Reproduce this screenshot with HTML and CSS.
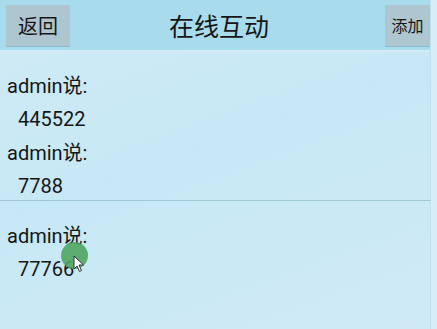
FILE: index.html
```html
<!DOCTYPE html>
<html>
<head>
<meta charset="utf-8">
<link rel="stylesheet" href="styles.css">
</head>
<body>
<div class="screen">
  <div class="main">
    <div class="header">
      <div class="btn btn-back">返回</div>
      <div class="title">在线互动</div>
      <div class="btn btn-add">添加</div>
    </div>
    <div class="list">
      <div class="group">
        <div class="who">admin说:</div>
        <div class="msg">445522</div>
        <div class="who">admin说:</div>
        <div class="msg">7788</div>
      </div>
      <div class="group second">
        <div class="who">admin说:</div>
        <div class="msg">77766</div>
      </div>
    </div>
  </div>
  <div class="edge"></div>
  <div class="touch"></div>
  <svg class="cursor" width="12" height="18" viewBox="0 0 12 18"><path d="M1 1 L1 14 L4 11 L6.5 16.5 L8.5 15.5 L6 10 L10.5 10 Z" fill="#fff" stroke="#333" stroke-width="1"/></svg>
</div>
</body>
</html>
```
FILE: styles.css
```css
html, body {
  margin: 0;
  padding: 0;
}
body {
  width: 437px;
  height: 329px;
  overflow: hidden;
  font-family: Roboto, "Noto Sans CJK SC", sans-serif;
  color: #161616;
}
.screen {
  position: relative;
  display: flex;
  width: 437px;
  height: 329px;
  overflow: hidden;
  background: linear-gradient(160deg, #d0ebf6 0%, #c6e8f4 45%, #cfeaf6 100%);
}
.main {
  width: 431px;
  display: flex;
  flex-direction: column;
}
.edge {
  width: 6px;
  background: #d6eef8;
  border-left: 1px solid #bfe0ec;
}
.header {
  flex-shrink: 0;
  height: 50px;
  background: #a8dcec;
  border-bottom: 2px solid #d0edf7;
  display: flex;
  align-items: center;
  justify-content: space-between;
  padding-left: 6px;
  position: relative;
}
.btn {
  background: #aec6cf;
  height: 41px;
  display: flex;
  align-items: center;
  justify-content: center;
  box-shadow: 0 1px 1px rgba(0,0,0,0.15);
  border-radius: 1px;
}
.btn-back {
  width: 64px;
  font-size: 20px;
}
.btn-add {
  width: 45px;
  font-size: 16px;
}
.title {
  position: absolute;
  left: 2px;
  right: -6px;
  text-align: center;
  font-size: 25px;
  pointer-events: none;
}
.list {
  display: flex;
  flex-direction: column;
  flex-shrink: 0;
}
.group {
  flex-shrink: 0;
  padding: 17px 0 0 7px;
  height: 149px;
  box-sizing: border-box;
  border-bottom: 1px solid #9ec6d4;
}
.group.second {
  border-bottom: none;
  padding-top: 18px;
}
.who {
  font-size: 20px;
  height: 34px;
  line-height: 34px;
}
.msg {
  font-size: 20px;
  height: 33px;
  line-height: 33px;
  padding-left: 11px;
}
.touch {
  position: absolute;
  left: 61px;
  top: 242px;
  width: 27px;
  height: 27px;
  border-radius: 50%;
  background: rgba(80, 165, 100, 0.9);
}
.cursor {
  position: absolute;
  left: 73px;
  top: 255px;
}
```
